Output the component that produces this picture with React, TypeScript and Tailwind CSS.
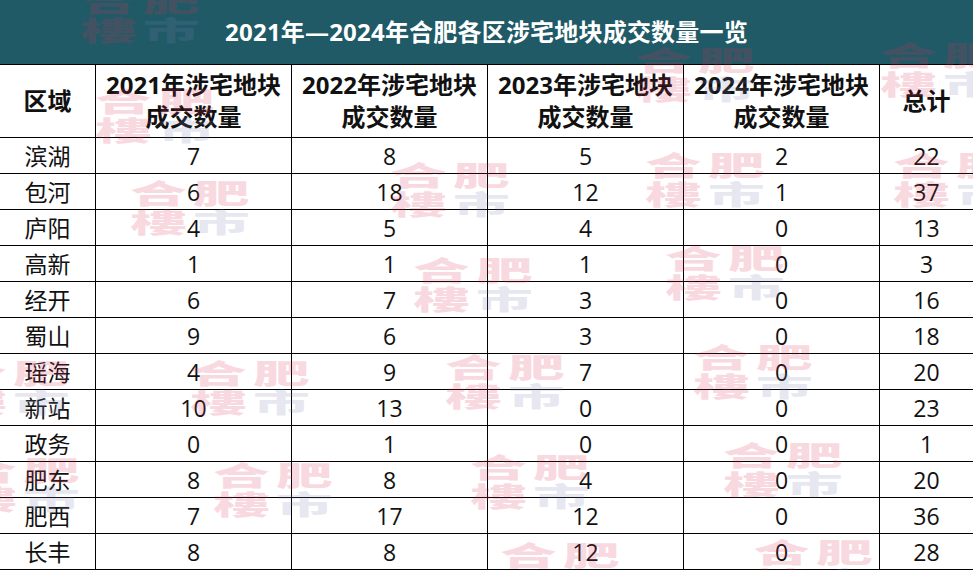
const rows: (string | number)[][] = [
  ['滨湖', 7, 8, 5, 2, 22],
  ['包河', 6, 18, 12, 1, 37],
  ['庐阳', 4, 5, 4, 0, 13],
  ['高新', 1, 1, 1, 0, 3],
  ['经开', 6, 7, 3, 0, 16],
  ['蜀山', 9, 6, 3, 0, 18],
  ['瑶海', 4, 9, 7, 0, 20],
  ['新站', 10, 13, 0, 0, 23],
  ['政务', 0, 1, 0, 0, 1],
  ['肥东', 8, 8, 4, 0, 20],
  ['肥西', 7, 17, 12, 0, 36],
  ['长丰', 8, 8, 12, 0, 28],
];

// watermark spots, full class names so tailwind picks them up
const marks = [
  'left-[80px] top-[-14px]',
  'left-[95px] top-[86px]',
  'left-[635px] top-[45px]',
  'left-[880px] top-[40px]',
  'left-[130px] top-[178px]',
  'left-[390px] top-[160px]',
  'left-[645px] top-[150px]',
  'left-[893px] top-[150px]',
  'left-[413px] top-[255px]',
  'left-[665px] top-[243px]',
  'left-[-50px] top-[358px]',
  'left-[190px] top-[358px]',
  'left-[445px] top-[352px]',
  'left-[693px] top-[342px]',
  'left-[-40px] top-[455px]',
  'left-[213px] top-[460px]',
  'left-[470px] top-[452px]',
  'left-[723px] top-[440px]',
  'left-[500px] top-[540px]',
  'left-[753px] top-[537px]',
];

const cols = 'grid grid-cols-[96px_196px_196px_196px_196px_93px]';
const cell = 'flex items-center justify-center border-r border-black last:border-r-0 text-center';

// the 合肥樓市 logo, stretched wide like the original
function Watermark({ pos }: { pos: string }) {
  return (
    <div
      className={`absolute ${pos} w-[126px] h-[58px] pointer-events-none select-none opacity-[0.18] font-['Noto_Sans_CJK_SC',sans-serif] font-black text-[27px] leading-[29px] text-[#e0325a]`}
    >
      <div className="w-[60px] origin-top-left [transform:scaleX(2.1)] whitespace-nowrap">
        合<span className="ml-[3px]">肥</span>
        <br />
        樓<span className="ml-[3px] text-[#7b7fb0]">市</span>
      </div>
    </div>
  );
}

export default function App() {
  return (
    <div className="relative w-[973px] h-[570px] overflow-hidden bg-white text-[#111] font-['Open_Sans','Noto_Sans_CJK_SC',sans-serif]">
      <div className="h-[65px] bg-[#1f5a66] border-b border-black flex items-center justify-center pb-[1px]">
        <h1 className="text-[24px] font-bold text-white tracking-[0.2px]">2021年—2024年合肥各区涉宅地块成交数量一览</h1>
      </div>

      <div className={`${cols} h-[73px] border-b border-black text-[24px] font-bold leading-[32px]`}>
        <div className={cell}>区域</div>
        {['2021', '2022', '2023', '2024'].map((y) => (
          <div key={y} className={cell}>
            <div>
              {y}年涉宅地块
              <br />
              成交数量
            </div>
          </div>
        ))}
        <div className={cell}>总计</div>
      </div>

      {rows.map((r) => (
        <div key={r[0]} className={`${cols} h-[36px] border-b border-black text-[23px] leading-[36px]`}>
          {r.map((v, i) => (
            <div key={i} className={cell}>
              {v}
            </div>
          ))}
        </div>
      ))}

      {marks.map((m) => (
        <Watermark key={m} pos={m} />
      ))}
    </div>
  );
}
